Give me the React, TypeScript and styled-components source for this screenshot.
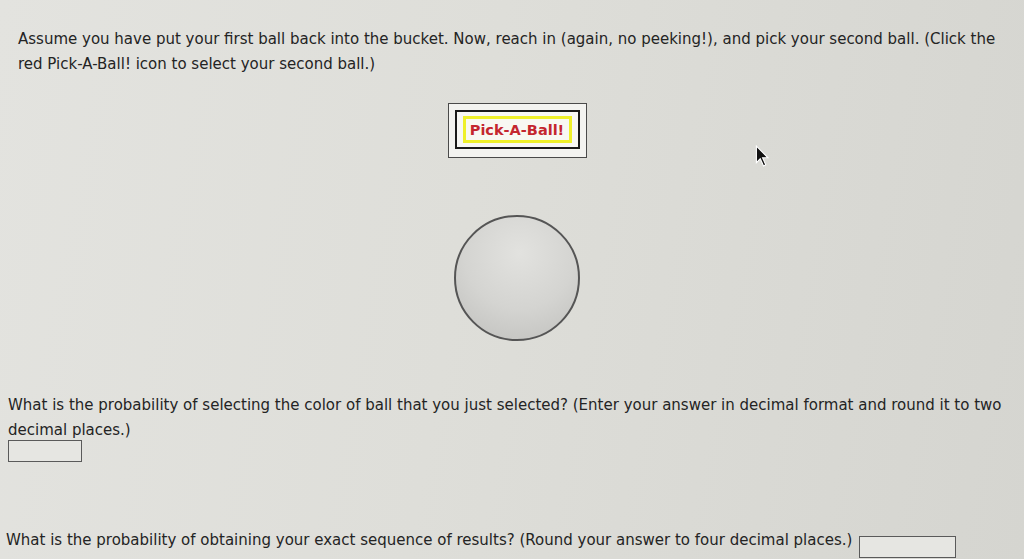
import styled, { createGlobalStyle } from "styled-components";

const GlobalStyle = createGlobalStyle`
  html, body {
    margin: 0;
    padding: 0;
  }
  body {
    width: 1024px;
    height: 559px;
    overflow: hidden;
    background: linear-gradient(100deg, #e3e3df 0%, #dedeD9 45%, #d5d5d0 100%);
    font-family: "DejaVu Sans", Verdana, sans-serif;
    color: #242424;
  }
`;

const Page = styled.div`
  display: flex;
  flex-direction: column;
  height: 559px;
  padding-top: 27px;
  box-sizing: border-box;
`;

const Text = styled.p<{ $indent: number; $width: number }>`
  margin: 0 0 0 ${(p) => p.$indent}px;
  width: ${(p) => p.$width}px;
  font-size: 15px;
  line-height: 25px;
`;

const Applet = styled.div`
  display: flex;
  flex-direction: column;
  align-items: center;
  margin: 26px 0 0 10px;
  position: relative;
`;

const OuterFrame = styled.div`
  border: 1px solid #4a4a4a;
  background: #f3f3f0;
  padding: 6px 6px 8px;
`;

const InnerFrame = styled.div`
  border: 2px solid #1a1a1a;
  background: #f7f7f4;
  padding: 4px 6px;
`;

const PickButton = styled.button`
  display: block;
  width: 109px;
  height: 27px;
  border: 3px solid #eef02a;
  background: #f8f8f2;
  color: #c4262e;
  font-family: "DejaVu Sans", Verdana, sans-serif;
  font-weight: bold;
  font-size: 14.5px;
  padding: 0;
  cursor: pointer;
`;

const Cursor = styled.svg`
  position: absolute;
  left: 745px;
  top: 42px;
`;

const Ball = styled.svg`
  margin-top: 55px;
`;

const Question = styled.div`
  margin-top: 50px;
  display: flex;
  flex-direction: column;
`;

const AnswerBox = styled.input<{ $w: number }>`
  width: ${(p) => p.$w}px;
  height: 22px;
  box-sizing: border-box;
  border: 1px solid #5a5a5a;
  background: #e6e6e2;
  padding: 0 3px;
  font-family: "DejaVu Sans", Verdana, sans-serif;
`;

const FirstBox = styled.div`
  margin: -3px 0 0 8px;
`;

const LastRow = styled.div`
  display: flex;
  align-items: flex-start;
  gap: 7px;
  margin: 66px 0 0 6px;
`;

const LastText = styled.span`
  font-size: 15px;
  line-height: 25px;
`;

const LastBox = styled.div`
  margin-top: 8px;
`;

export default function App() {
  return (
    <>
      <GlobalStyle />
      <Page>
        <Text $indent={18} $width={990}>
          Assume you have put your first ball back into the bucket. Now, reach in
          (again, no peeking!), and pick your second ball. (Click the red
          Pick-A-Ball! icon to select your second ball.)
        </Text>
        <Applet>
          <OuterFrame>
            <InnerFrame>
              <PickButton type="button">Pick-A-Ball!</PickButton>
            </InnerFrame>
          </OuterFrame>
          <Cursor width="16" height="22" viewBox="0 0 14 20">
            <path
              d="M1 1 L1 16 L4.5 12.5 L7.5 19 L9.5 18 L6.6 11.6 L11.5 11.6 Z"
              fill="#111"
              stroke="#fff"
              strokeWidth="1"
            />
          </Cursor>
          <Ball width="130" height="130" viewBox="0 0 130 130">
            <defs>
              <radialGradient id="ballFill" cx="52%" cy="30%" r="75%">
                <stop offset="0%" stopColor="#e2e2df" />
                <stop offset="60%" stopColor="#d4d4d1" />
                <stop offset="100%" stopColor="#c4c4c1" />
              </radialGradient>
            </defs>
            <circle cx="65" cy="65" r="62" fill="url(#ballFill)" stroke="#555" strokeWidth="2" />
          </Ball>
        </Applet>
        <Question>
          <Text $indent={8} $width={1012}>
            What is the probability of selecting the color of ball that you just
            selected? (Enter your answer in decimal format and round it to two
            decimal places.)
          </Text>
          <FirstBox>
            <AnswerBox $w={74} type="text" />
          </FirstBox>
        </Question>
        <LastRow>
          <LastText>
            What is the probability of obtaining your exact sequence of results?
            (Round your answer to four decimal places.)
          </LastText>
          <LastBox>
            <AnswerBox $w={97} type="text" />
          </LastBox>
        </LastRow>
      </Page>
    </>
  );
}
